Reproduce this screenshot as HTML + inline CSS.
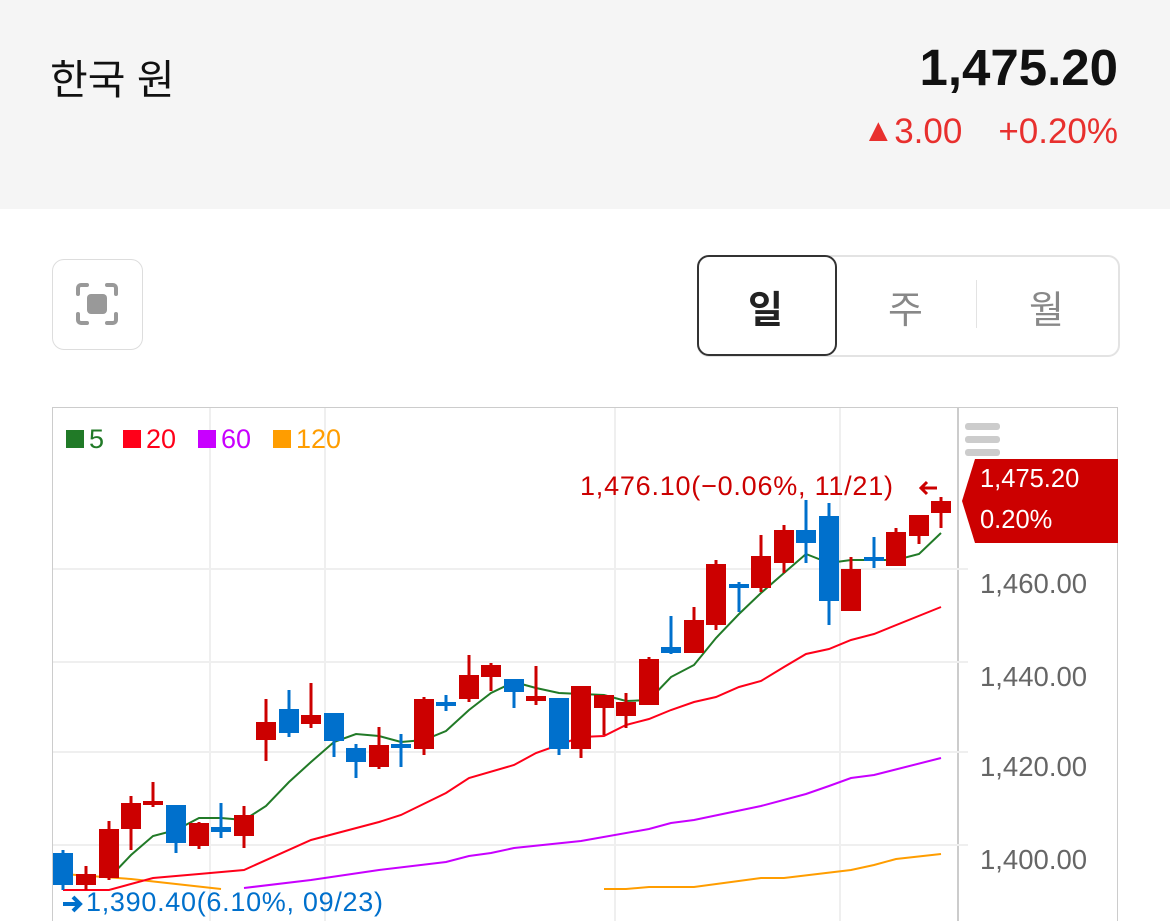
<!DOCTYPE html>
<html><head><meta charset="utf-8"><style>
body{margin:0;width:1170px;height:921px;overflow:hidden;background:#fff;font-family:"Liberation Sans","Noto Sans CJK KR",sans-serif;position:relative}
.hdr{position:absolute;left:0;top:0;width:1170px;height:209px;background:#f5f5f5}
.t{position:absolute;white-space:nowrap}
</style></head><body>
<div class="hdr"></div>
<div class="t" style="left:50px;top:46px;font-size:41px;color:#111">한국 원</div>
<div class="t" style="right:52px;top:38px;font-size:51px;font-weight:bold;color:#111">1,475.20</div>
<div class="t" style="right:52px;top:112px;font-size:35px;color:#e8302e"><span style="font-size:32px;vertical-align:2px">▲</span>3.00<span style="display:inline-block;width:36px"></span>+0.20%</div>

<div style="position:absolute;left:52px;top:259px;width:89px;height:89px;border:1px solid #ddd;border-radius:12px;box-sizing:content-box"></div>
<svg style="position:absolute;left:75px;top:282px" width="44" height="44" viewBox="0 0 44 44" fill="none" stroke="#999" stroke-width="4" stroke-linecap="round">
<path d="M3 12V6a3 3 0 0 1 3-3h6M32 3h6a3 3 0 0 1 3 3v6M41 32v6a3 3 0 0 1-3 3h-6M12 41H6a3 3 0 0 1-3-3v-6"/>
<rect x="12" y="12" width="20" height="20" rx="4" fill="#999" stroke="none"/></svg>

<div style="position:absolute;left:697px;top:255px;width:419px;height:98px;border:2px solid #e3e3e3;border-radius:12px"></div>
<div style="position:absolute;left:697px;top:255px;width:136px;height:97px;border:2px solid #333;border-radius:12px;background:#fff"></div>
<div style="position:absolute;left:976px;top:280px;width:1px;height:48px;background:#e3e3e3"></div>
<div class="t" style="left:748px;top:279px;font-size:38px;font-weight:bold;color:#222">일</div>
<div class="t" style="left:888px;top:279px;font-size:38px;color:#888">주</div>
<div class="t" style="left:1029px;top:279px;font-size:38px;color:#888">월</div>

<svg style="position:absolute;left:0;top:0" width="1170" height="921">
<rect x="52.5" y="407.5" width="1065" height="520" fill="none" stroke="#ccc"/>
<line x1="958" y1="407" x2="958" y2="921" stroke="#ccc" stroke-width="2"/>
<g stroke="#efefef" stroke-width="2">
<line x1="53" y1="569" x2="968" y2="569"/><line x1="53" y1="662" x2="968" y2="662"/><line x1="53" y1="752" x2="968" y2="752"/><line x1="53" y1="845" x2="968" y2="845"/>
<line x1="210" y1="408" x2="210" y2="921"/><line x1="325" y1="408" x2="325" y2="921"/><line x1="615" y1="408" x2="615" y2="921"/><line x1="840" y1="408" x2="840" y2="921"/>
</g>
<g fill="#ccc"><rect x="965" y="423" width="35" height="7" rx="3"/><rect x="965" y="436" width="35" height="7" rx="3"/><rect x="965" y="449" width="35" height="7" rx="3"/></g>
<g font-size="27.5" fill="#666" font-family="Liberation Sans,sans-serif">
<text x="980" y="593">1,460.00</text><text x="980" y="686">1,440.00</text><text x="980" y="776">1,420.00</text><text x="980" y="869">1,400.00</text></g>
<polygon points="975,459 1118,459 1118,543 975,543 962,501" fill="#cc0000"/>
<g font-size="25.5" fill="#fff"><text x="980" y="487">1,475.20</text><text x="980" y="528">0.20%</text></g>
<g font-size="27"><rect x="66" y="430" width="18" height="18" fill="#217a27"/><text x="89" y="448" fill="#217a27">5</text>
<rect x="123" y="430" width="18" height="18" fill="#ff0019"/><text x="146" y="448" fill="#ff0019">20</text>
<rect x="198" y="430" width="18" height="18" fill="#c800ff"/><text x="221" y="448" fill="#c800ff">60</text>
<rect x="273" y="430" width="18" height="18" fill="#ff9d00"/><text x="296" y="448" fill="#ff9d00">120</text></g>
<text x="580" y="495" font-size="27" textLength="313" fill="#cc0000">1,476.10(−0.06%, 11/21)</text>
<path d="M937 488h-16m6-6l-6 6 6 6" stroke="#cc0000" stroke-width="3" fill="none"/>
<text x="86" y="911" font-size="27" textLength="297" fill="#0070cc">1,390.40(6.10%, 09/23)</text>
<path d="M63 904h17m-7-7l7 7-7 7" stroke="#0070cc" stroke-width="4" fill="none"/>
<g fill="none" stroke-width="2">
<polyline stroke="#ff9d00" points="63,874 131,879 221,889"/>
<polyline stroke="#ff9d00" points="604,889 626,889 649,887 694,887 761,878 784,878 851,870 874,865 896,859 941,854"/>
<polyline stroke="#c800ff" points="244,888 311,880 379,870 446,862 469,856 491,853 514,848 581,841 649,829 671,823 694,820 761,806 806,794 829,786 851,778 874,775 941,758"/>
<polyline stroke="#ff0019" points="63,890 109,890 153,878 199,874 244,870 311,840 379,822 401,815 446,793 469,778 514,765 536,753 581,737 604,736 626,725 649,719 671,710 694,702 716,697 739,687 761,681 784,667 806,654 829,649 851,640 874,634 941,607"/>
<polyline stroke="#217a27" points="109,878 131,855 153,836 176,830 199,818 221,818 244,820 266,806 289,782 311,762 334,742 356,734 379,736 401,742 424,740 446,731 469,710 491,693 514,682 536,688 559,693 581,694 604,695 626,701 649,700 671,677 694,665 716,638 739,614 761,593 784,573 806,554 829,563 851,560 874,560 896,560 919,554 941,533"/>
</g>
<g id="c"></g>
</svg>
<script>
var d=[[63,'b',853,885,850,890],[86,'r',874,885,866,890],[109,'r',829,878,821,880],[131,'r',803,829,796,850],[153,'r',801,804,782,807],[176,'b',805,843,805,853],[199,'r',823,846,822,849],[221,'b',827,832,803,838],[244,'r',815,836,806,848],[266,'r',722,740,699,761],[289,'b',709,733,690,737],[311,'r',715,724,683,728],[334,'b',713,741,713,757],[356,'b',748,762,744,778],[379,'r',745,767,727,769],[401,'b',744,748,734,767],[424,'r',699,749,697,755],[446,'b',702,706,695,711],[469,'r',675,699,655,702],[491,'r',665,677,663,691],[514,'b',679,692,679,708],[536,'r',696,701,666,705],[559,'b',698,749,698,755],[581,'r',686,749,686,758],[604,'r',695,708,695,735],[626,'r',702,716,693,728],[649,'r',659,705,657,705],[671,'b',647,653,616,654],[694,'r',620,653,607,653],[716,'r',564,625,560,630],[739,'b',584,588,582,612],[761,'r',556,588,535,592],[784,'r',530,563,525,573],[806,'b',530,543,500,563],[829,'b',516,601,503,625],[851,'r',569,611,557,611],[874,'b',557,561,537,568],[896,'r',532,566,528,566],[919,'r',515,536,515,544],[941,'r',501,513,497,528]];
var s='';d.forEach(function(c){var col=c[1]=='r'?'#cc0000':'#0070cc';s+='<rect x="'+(c[0]-1.5)+'" y="'+c[4]+'" width="3" height="'+(c[5]-c[4])+'" fill="'+col+'"/><rect x="'+(c[0]-10)+'" y="'+c[2]+'" width="20" height="'+Math.max(4,c[3]-c[2])+'" fill="'+col+'"/>';});
document.getElementById('c').innerHTML=s;
</script>
</body></html>
